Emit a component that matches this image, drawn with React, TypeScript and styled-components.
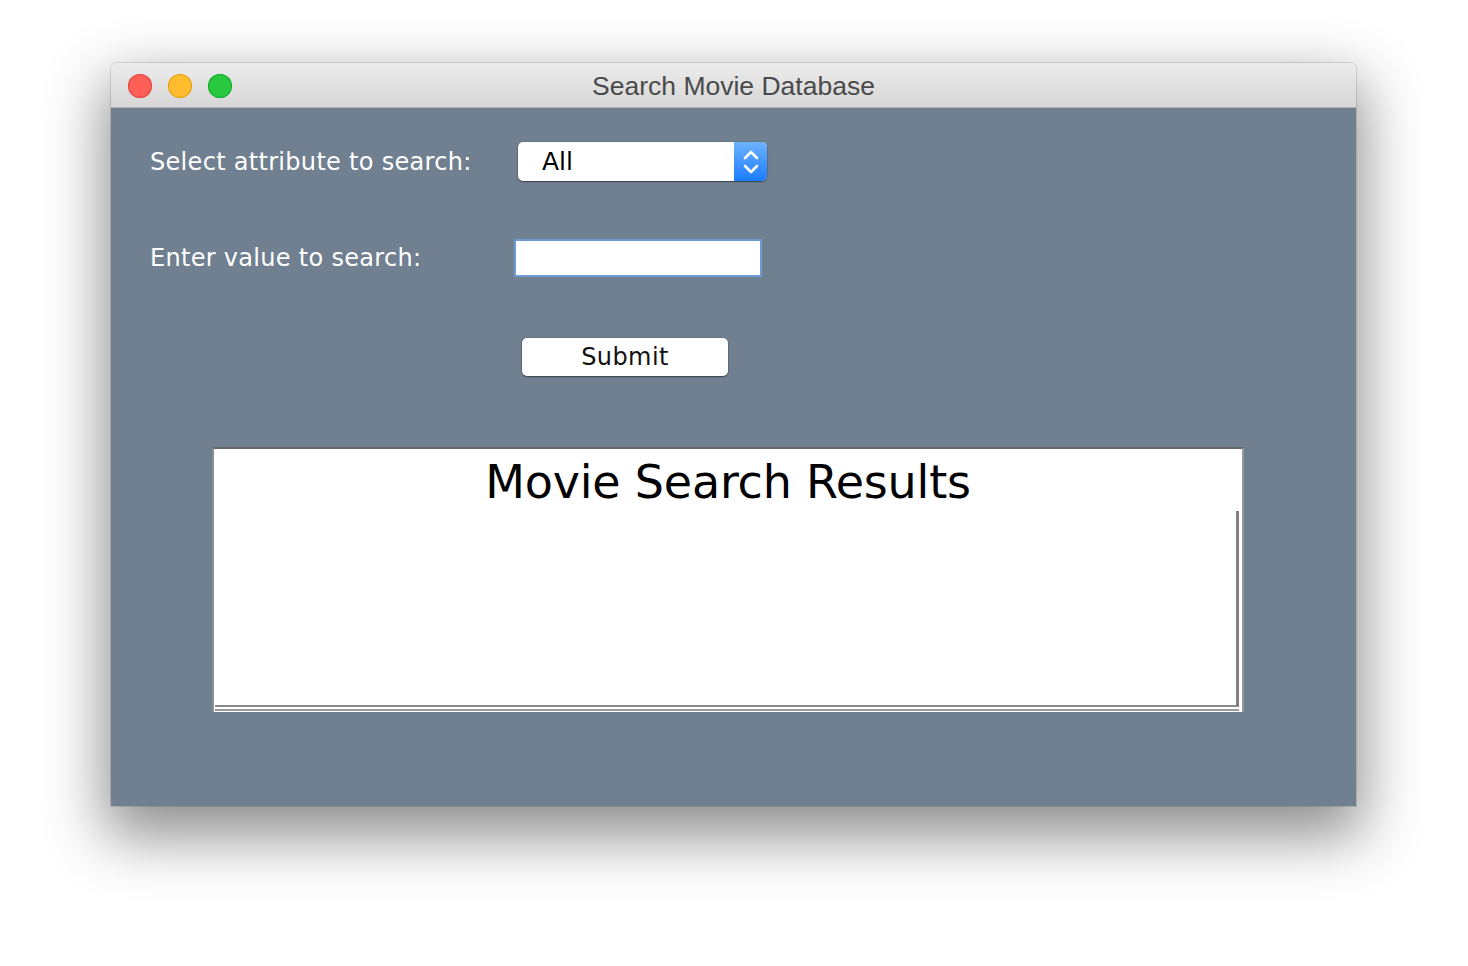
import React from "react";
import styled, { createGlobalStyle } from "styled-components";

const Global = createGlobalStyle`
  html, body { margin: 0; padding: 0; background: #ffffff; }
  body { font-family: "DejaVu Sans", "Liberation Sans", sans-serif; }
`;

const Page = styled.div`
  width: 1468px;
  height: 966px;
  box-sizing: border-box;
  padding: 63px 0 0 111px;
  background: #ffffff;
`;

const Window = styled.div`
  width: 1245px;
  height: 743px;
  display: flex;
  flex-direction: column;
  border-radius: 6px 6px 0 0;
  box-shadow: 0 24px 60px 6px rgba(0, 0, 0, 0.45), 0 0 0 1px rgba(0, 0, 0, 0.12);
  overflow: hidden;
`;

const TitleBar = styled.div`
  height: 45px;
  flex: none;
  position: relative;
  display: flex;
  align-items: center;
  justify-content: center;
  background: linear-gradient(#ececec, #d6d6d6);
  border-bottom: 1px solid #b4b4b4;
  box-sizing: border-box;
`;

const Lights = styled.div`
  position: absolute;
  left: 17px;
  top: 11px;
  display: flex;
  gap: 16px;
`;

const Light = styled.span<{ $c: string; $b: string }>`
  width: 24px;
  height: 24px;
  border-radius: 50%;
  background: ${(p) => p.$c};
  box-shadow: inset 0 0 0 1px ${(p) => p.$b};
`;

const Title = styled.div`
  font-family: "Liberation Sans", Arial, sans-serif;
  font-size: 26.5px;
  color: #4a4a4a;
  margin-top: 3px;
`;

const Content = styled.div`
  flex: 1;
  background: #708090;
  display: flex;
  flex-direction: column;
  padding: 34px 0 0 39px;
  box-sizing: border-box;
`;

const Row = styled.div<{ $mt: number }>`
  display: flex;
  align-items: center;
  margin-top: ${(p) => p.$mt}px;
`;

const Label = styled.div`
  width: 364px;
  flex: none;
  color: #ffffff;
  font-size: 24px;
  letter-spacing: 0.3px;
`;

const Combo = styled.div`
  margin-left: 4px;
  width: 249px;
  height: 39px;
  box-sizing: border-box;
  display: flex;
  border-radius: 5px;
  background: #ffffff;
  box-shadow: 0 1px 1.5px rgba(0, 0, 0, 0.45), 0 0 0 0.5px rgba(0, 0, 0, 0.15);
  overflow: hidden;
`;

const ComboText = styled.div`
  flex: 1;
  padding-left: 24px;
  display: flex;
  align-items: center;
  font-size: 25px;
  color: #000;
`;

const ComboArrow = styled.div`
  width: 33px;
  display: flex;
  align-items: center;
  justify-content: center;
  background: linear-gradient(#6db3ff, #1a7cff);
`;

const TextField = styled.div`
  width: 248px;
  height: 38px;
  box-sizing: border-box;
  background: #ffffff;
  border: 2px solid #6c9bd5;
`;

const ButtonRow = styled.div`
  margin-top: 61px;
  padding-left: 372px;
`;

const SubmitButton = styled.button`
  width: 206px;
  height: 38px;
  border: none;
  border-radius: 5px;
  background: #ffffff;
  box-shadow: 0 1px 1.5px rgba(0, 0, 0, 0.45), 0 0 0 0.5px rgba(0, 0, 0, 0.15);
  font-family: "DejaVu Sans", sans-serif;
  font-size: 24px;
  color: #111;
  letter-spacing: 0.4px;
  padding: 0;
`;

const Panel = styled.div`
  margin: 71px 0 0 62px;
  width: 1032px;
  height: 265px;
  box-sizing: border-box;
  background: #ffffff;
  border-top: 2px solid #666666;
  border-left: 2px solid #8c8c8c;
  border-right: 2px solid #9a9a9a;
  display: flex;
  flex-direction: column;
`;

const PanelTitle = styled.div`
  height: 62px;
  flex: none;
  text-align: center;
  font-size: 46px;
  line-height: 66px;
  color: #000;
  letter-spacing: -0.2px;
`;

const ResultsArea = styled.div`
  margin: 0 3px 0 1px;
  height: 196px;
  flex: none;
  box-sizing: border-box;
  border-right: 3px solid #808080;
  border-bottom: 2px solid #8a8a8a;
  box-shadow: 0 2px 0 #ffffff, 0 4px 0 #9a9a9a;
`;

export default function App() {
  return (
    <>
      <Global />
      <Page>
        <Window>
          <TitleBar>
            <Lights>
              <Light $c="#fe5f57" $b="#e2463f" />
              <Light $c="#febc2e" $b="#e1a116" />
              <Light $c="#28c840" $b="#17a92b" />
            </Lights>
            <Title>Search Movie Database</Title>
          </TitleBar>
          <Content>
            <Row $mt={0}>
              <Label>Select attribute to search:</Label>
              <Combo>
                <ComboText>All</ComboText>
                <ComboArrow>
                  <svg width="18" height="30" viewBox="0 0 18 30">
                    <path d="M3 11 L9 5 L15 11" fill="none" stroke="#fff" strokeWidth="2.6" strokeLinecap="round" strokeLinejoin="round" />
                    <path d="M3 19 L9 25 L15 19" fill="none" stroke="#fff" strokeWidth="2.6" strokeLinecap="round" strokeLinejoin="round" />
                  </svg>
                </ComboArrow>
              </Combo>
            </Row>
            <Row $mt={58}>
              <Label>Enter value to search:</Label>
              <TextField />
            </Row>
            <ButtonRow>
              <SubmitButton>Submit</SubmitButton>
            </ButtonRow>
            <Panel>
              <PanelTitle>Movie Search Results</PanelTitle>
              <ResultsArea />
            </Panel>
          </Content>
        </Window>
      </Page>
    </>
  );
}
